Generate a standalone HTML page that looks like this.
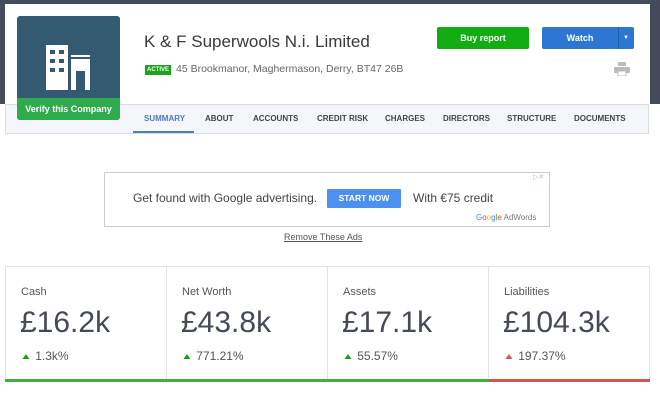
<!DOCTYPE html>
<html><head><style>
*{margin:0;padding:0;box-sizing:border-box}
body{width:660px;height:407px;background:#fff;font-family:"Liberation Sans",Arial,sans-serif;position:relative;overflow:hidden}
.abs{position:absolute}
</style></head><body>
<div class="abs" style="left:0;top:0;width:660px;height:104px;background:#444b5a"></div>
<div class="abs" style="left:5px;top:4px;width:645px;height:100px;background:#fff"></div>
<div class="abs" style="left:5px;top:104px;width:644px;height:30px;background:#f4f6f9;border:1px solid #d8dde4"></div>
<div class="abs" style="left:17px;top:16px;width:103px;height:104px;background:#345a71;border-radius:3px;overflow:hidden">
<svg class="abs" style="left:29px;top:29px" width="45" height="45" viewBox="0 0 45 45">
<rect x="0" y="0" width="22" height="45" fill="#fff"/>
<rect x="4" y="5" width="5" height="4" fill="#345a71"/><rect x="13" y="5" width="5" height="4" fill="#345a71"/>
<rect x="4" y="14" width="5" height="4" fill="#345a71"/><rect x="13" y="14" width="5" height="4" fill="#345a71"/>
<rect x="4" y="23" width="5" height="4" fill="#345a71"/><rect x="13" y="23" width="5" height="4" fill="#345a71"/>
<rect x="25" y="10" width="19" height="2" fill="#fff"/>
<rect x="25" y="14" width="19" height="31" fill="#fff"/>
<rect x="30" y="26" width="9" height="19" fill="#345a71"/>
</svg>
<div class="abs" style="left:0;top:82px;width:103px;height:22px;background:#2eab4c;color:#fff;font-size:9px;font-weight:bold;text-align:center;line-height:22px">Verify this Company</div>
</div>
<div class="abs" style="left:144px;top:32px;font-size:17px;color:#3a3a3a">K &amp; F Superwools N.i. Limited</div>
<div class="abs" style="left:145px;top:65px;background:#19a419;color:#fff;font-size:6px;font-weight:bold;padding:1px 2px;line-height:8px">ACTIVE</div>
<div class="abs" style="left:176px;top:63px;font-size:10.5px;color:#666">45 Brookmanor, Maghermason, Derry, BT47 26B</div>
<div class="abs" style="left:437px;top:27px;width:92px;height:22px;background:#12ad12;border-radius:2px;color:#fff;font-size:9px;font-weight:bold;text-align:center;line-height:22px">Buy report</div>
<div class="abs" style="left:542px;top:27px;width:92px;height:22px;background:#2d76d2;border-radius:2px;color:#fff;font-size:9px;font-weight:bold;line-height:22px"><span style="position:absolute;left:0;width:76px;text-align:center">Watch</span><span style="position:absolute;left:76px;top:0;width:1px;height:22px;background:#1f5fae"></span><span style="position:absolute;left:81px;font-size:6px">▼</span></div>
<svg class="abs" style="left:614px;top:62px" width="16" height="14" viewBox="0 0 16 14"><rect x="4" y="0" width="8" height="4" fill="#bbb"/><rect x="0" y="5" width="16" height="6" rx="1" fill="#bbb"/><rect x="4" y="9" width="8" height="5" fill="#fff" stroke="#bbb"/></svg>
<div class="abs" style="top:114px;left:0;font-size:8px;font-weight:bold;color:#444;width:660px">
<span class="abs" style="left:144px;color:#4a7cc9">SUMMARY</span>
<span class="abs" style="left:205px">ABOUT</span>
<span class="abs" style="left:253px">ACCOUNTS</span>
<span class="abs" style="left:317px">CREDIT RISK</span>
<span class="abs" style="left:385px">CHARGES</span>
<span class="abs" style="left:443px">DIRECTORS</span>
<span class="abs" style="left:507px">STRUCTURE</span>
<span class="abs" style="left:574px">DOCUMENTS</span>
</div>
<div class="abs" style="left:133px;top:131px;width:61px;height:2px;background:#4a7cc9"></div>
<div class="abs" style="left:104px;top:172px;width:446px;height:55px;border:1px solid #ccc"></div>
<div class="abs" style="left:133px;top:191px;font-size:12px;color:#444">Get found with Google advertising.</div>
<div class="abs" style="left:327px;top:189px;width:74px;height:19px;background:#4d90f0;border-radius:1px;color:#fff;font-size:8.5px;font-weight:bold;text-align:center;line-height:19px">START NOW</div>
<div class="abs" style="left:413px;top:191px;font-size:12px;color:#444">With €75 credit</div>
<div class="abs" style="left:476px;top:213px;font-size:8px;color:#777"><span style="color:#4285f4">G</span><span style="color:#ea4335">o</span><span style="color:#fbbc05">o</span><span style="color:#4285f4">g</span><span style="color:#34a853">l</span><span style="color:#ea4335">e</span> AdWords</div>
<div class="abs" style="left:533px;top:173px;font-size:7px;color:#9cc">▷✕</div>
<div class="abs" style="left:284px;top:232px;font-size:9px;color:#555;text-decoration:underline">Remove These Ads</div>
<div class="abs" style="left:5px;top:266px;width:645px;height:116px;border:1px solid #e2e2e2;border-bottom:none"></div>
<div class="abs" style="left:166px;top:266px;width:1px;height:114px;background:#e2e2e2"></div>
<div class="abs" style="left:327px;top:266px;width:1px;height:114px;background:#e2e2e2"></div>
<div class="abs" style="left:488px;top:266px;width:1px;height:114px;background:#e2e2e2"></div>
<div class="abs" style="left:5px;top:379px;width:484px;height:3px;background:#3cb43c"></div>
<div class="abs" style="left:489px;top:379px;width:161px;height:3px;background:#d9534f"></div>
<div class="abs" style="left:21px;top:286px;font-size:11px;color:#555">Cash</div>
<div class="abs" style="left:182px;top:286px;font-size:11px;color:#555">Net Worth</div>
<div class="abs" style="left:343px;top:286px;font-size:11px;color:#555">Assets</div>
<div class="abs" style="left:504px;top:286px;font-size:11px;color:#555">Liabilities</div>
<div class="abs" style="left:20px;top:306px;font-size:30px;color:#444a56">£16.2k</div>
<div class="abs" style="left:181px;top:306px;font-size:30px;color:#444a56">£43.8k</div>
<div class="abs" style="left:342px;top:306px;font-size:30px;color:#444a56">£17.1k</div>
<div class="abs" style="left:503px;top:306px;font-size:30px;color:#444a56">£104.3k</div>
<div class="abs" style="left:20px;top:349px;font-size:12px;color:#555"><span style="color:#1a9e1a;font-size:12px;display:inline-block;transform:scaleY(.7)">▲</span> 1.3k%</div>
<div class="abs" style="left:181px;top:349px;font-size:12px;color:#555"><span style="color:#1a9e1a;font-size:12px;display:inline-block;transform:scaleY(.7)">▲</span> 771.21%</div>
<div class="abs" style="left:342px;top:349px;font-size:12px;color:#555"><span style="color:#1a9e1a;font-size:12px;display:inline-block;transform:scaleY(.7)">▲</span> 55.57%</div>
<div class="abs" style="left:503px;top:349px;font-size:12px;color:#555"><span style="color:#d9534f;font-size:12px;display:inline-block;transform:scaleY(.7)">▲</span> 197.37%</div>
</body></html>
